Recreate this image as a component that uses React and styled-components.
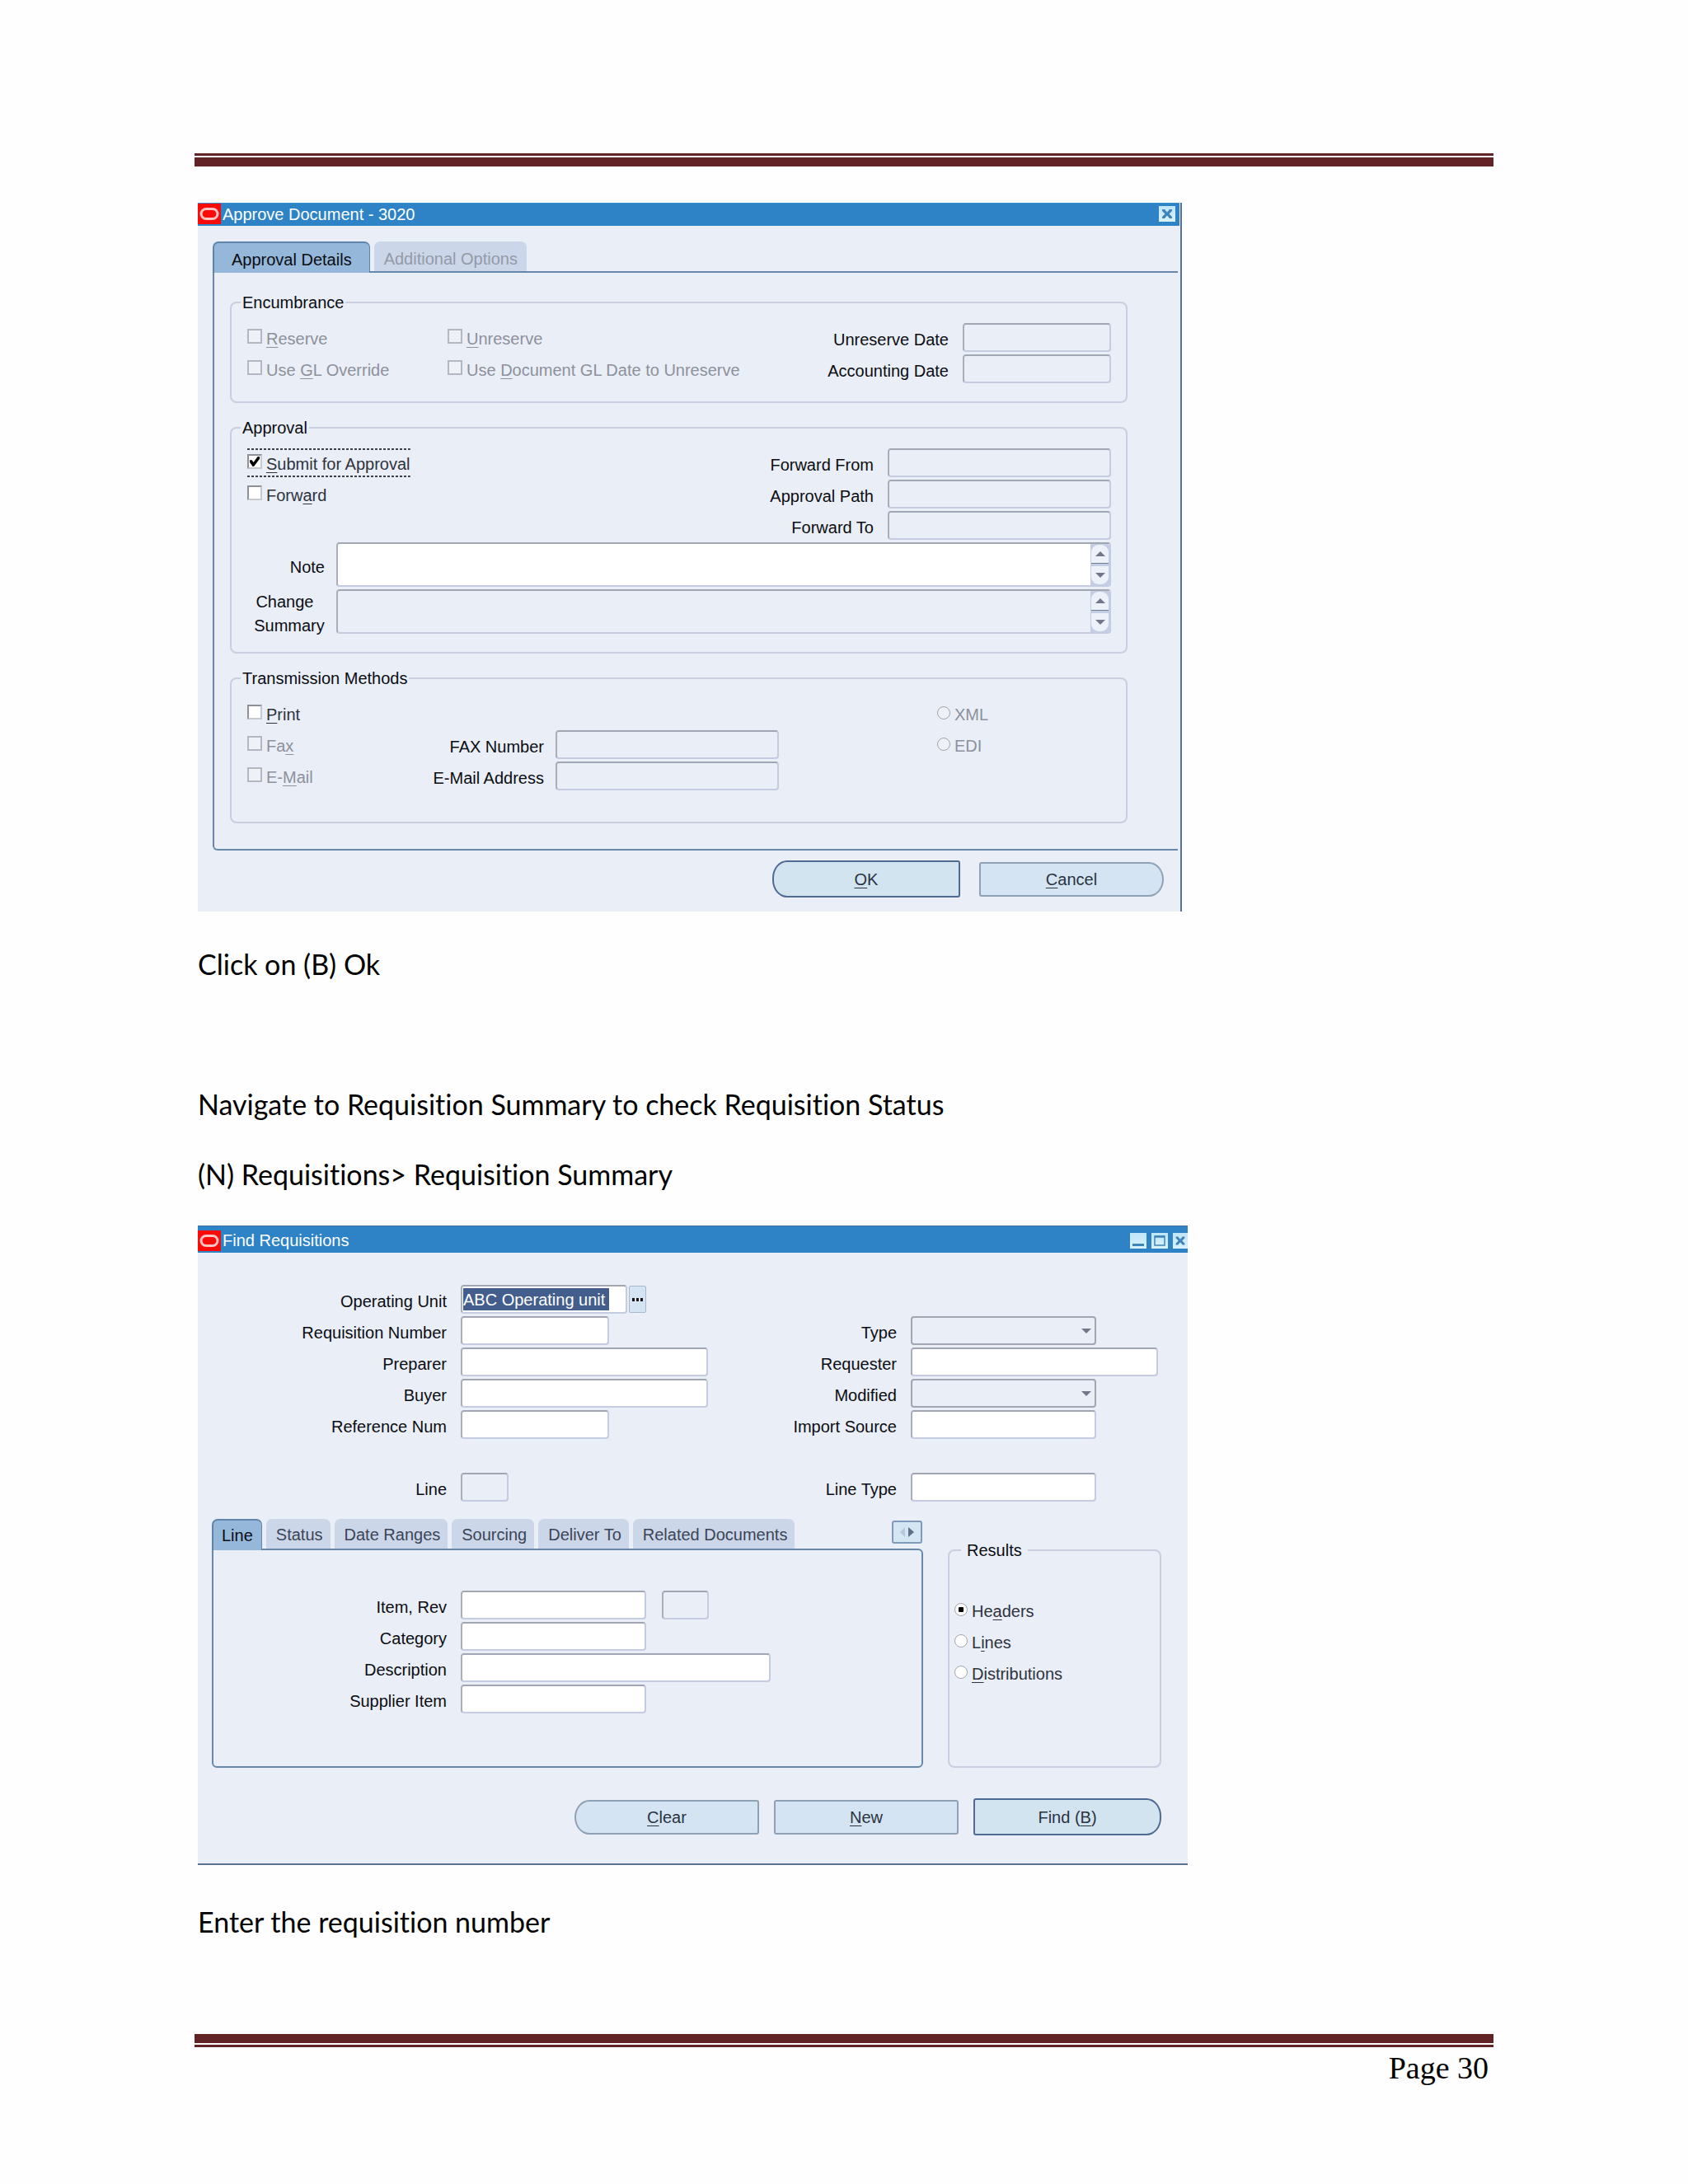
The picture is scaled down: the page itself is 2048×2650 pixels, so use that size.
import React, { useId } from 'react';
import styled, { createGlobalStyle, css } from 'styled-components';

const GlobalStyle = createGlobalStyle`
  *, *::before, *::after {
    box-sizing: border-box;
  }

  body {
    margin: 0;
    background: #fefefe;
  }

  button, input, select, textarea {
    font: inherit;
    color: inherit;
  }
`;

const Page = styled.main`
  padding: 186px 236px 80px;
  color: #000;
  font-family: Lato, "Open Sans", sans-serif;
`;

const Rule = styled.div`
  height: 16px;
  border: solid #622326;
  border-width: ${(p) => (p.$flip ? '11px 0 3px' : '3px 0 11px')};
`;

const Content = styled.div`
  padding: 44px 4px 113px;
`;

const Text = styled.p`
  margin: 0 0 ${(p) => (p.$gap ? p.$gap : '39px')};
  font-size: 34px;
  line-height: 46px;
  font-variant-ligatures: none;
`;

const PageNumber = styled.footer`
  padding: 2px 6px 0 0;
  text-align: right;
  font: 38px/46px "Liberation Serif", serif;
`;

/* ---- window chrome ---- */

const Window = styled.section`
  width: 100%;
  max-width: ${(p) => p.$width};
  margin-bottom: ${(p) => p.$after};
  background: #e9eef7;
  color: #0b0d12;
  font: 20px/24px "Liberation Sans", Arial, sans-serif;
  border: solid #5a7194;
  border-width: ${(p) => (p.$edge === 'right' ? '0 2px 0 0' : '0 0 2px')};
`;

const TitleBar = styled.header`
  display: flex;
  align-items: center;
  gap: 2px;
  height: ${(p) => (p.$tall ? '33px' : '28px')};
  padding-top: ${(p) => (p.$tall ? '2px' : '0')};
  padding-right: ${(p) => (p.$tall ? '0' : '5px')};
  padding-bottom: ${(p) => (p.$tall ? '0' : '2px')};
  margin-right: ${(p) => (p.$tall ? '0' : '1px')};
  background: #2d83c6;
  border-top: 1px solid ${(p) => (p.$tall ? '#3f6f9c' : '#3b8ecd')};
  color: #fff;
`;

const Title = styled.h2`
  flex: 1;
  margin: 0;
  font: inherit;
`;

const Controls = styled.div`
  display: flex;
  gap: 6px;
`;

const ControlButton = styled.button`
  display: flex;
  width: ${(p) => (p.$cut ? '18px' : '20px')};
  height: 19px;
  padding: 0;
  border: 0;
  overflow: hidden;
  background: linear-gradient(#bfe6f8, #d9f1fc);
`;

const Body = styled.div`
  padding-top: ${(p) => p.$top};
`;

/* ---- tabs ---- */

const TabArea = styled.div`
  flex: 1;
  margin: ${(p) => p.$margin || '0'};
`;

const TabStrip = styled.div`
  display: flex;
  gap: 5px;
  height: 36px;
`;

const Tab = styled.button`
  height: 36px;
  padding: ${(p) => (p.$low ? '6px 11px 0 12px' : '2px 9px 0 12px')};
  border: 0;
  border-radius: 7px 7px 0 0;
  background: #ccd6e9;
  color: #3b4556;
  white-space: nowrap;

  &:disabled {
    color: #939aa8;
  }

  ${(p) =>
    p.$active &&
    css`
      position: relative;
      height: 38px;
      padding: ${p.$low ? '6px 21px 2px' : '2px 10px 2px'};
      border: solid #5f84ab;
      border-width: 2px 1px 0 2px;
      background: #94b7da;
      color: #0b0d12;
    `}
`;

const TabScroll = styled.button`
  display: flex;
  align-items: center;
  justify-content: center;
  width: 37px;
  height: 28px;
  margin: 2px 1px 0 auto;
  padding: 0;
  border: 2px solid #7f9bb9;
  border-radius: 3px;
  background: #d4e5f3;
`;

const TabPanel = styled.div`
  border: 2px solid #6788ab;
  ${(p) =>
    p.$open
      ? css`
          border-right: 0;
          border-radius: 0 0 0 6px;
          padding: 24px 61px 31px 19px;
        `
      : css`
          border-radius: 0 6px 6px 6px;
          padding: 49px 0 64px;
        `}
`;

/* ---- form parts ---- */

const Group = styled.fieldset`
  min-width: 0;
  margin: 0 0 ${(p) => (p.$last ? '0' : '18px')};
  padding: 13px 18px ${(p) => (p.$last ? '38px' : '22px')} 19px;
  border: 2px solid #c9cee0;
  border-radius: 8px;
`;

const Legend = styled.legend`
  margin-left: -8px;
  padding: 0 2px;
  line-height: 24px;
`;

const ResultsGroup = styled(Group)`
  width: 259px;
  margin: 26px 0 0 30px;
  padding: 43px 6px 0;

  ${Legend} {
    margin-left: 8px;
    padding: 0 7px;
  }
`;

const Row = styled.div`
  display: flex;
  align-items: center;
  height: ${(p) => (p.$tall ? '54px' : '35px')};
  margin-top: ${(p) => (p.$spaced ? '41px' : '3px')};

  &:first-child, legend + & {
    margin-top: 0;
  }
`;

const RowPart = styled.div`
  display: flex;
  align-items: center;
  flex: 0 0 645px;
  margin-right: 192px;
`;

const Stack = styled.div`
  flex: ${(p) => p.$flex};
  padding-top: ${(p) => p.$top || '0'};
`;

const Columns = styled.div`
  display: flex;
`;

const LowerArea = styled.div`
  display: flex;
  padding: 21px 32px 0 17px;
`;

const FieldLabel = styled.label`
  flex: ${(p) => (p.$width ? `0 0 ${p.$width}` : 'none')};
  margin-left: ${(p) => (p.$width ? '0' : 'auto')};
  margin-right: ${(p) => (p.$tight ? '14px' : '17px')};
  padding-top: 5px;
  padding-left: ${(p) => (p.$center ? '8px' : '0')};
  text-align: ${(p) => (p.$center ? 'center' : 'right')};
  line-height: ${(p) => (p.$center ? '29px' : '24px')};
`;

const box = css`
  border: 2px solid #c5cbe0;
  border-top-color: #a1a6b3;
  border-left-color: #a9aebb;
  border-radius: 4px;
  background: #fff;
`;

const TextInput = styled.input`
  ${box}
  flex: none;
  width: ${(p) => p.$width};
  height: 35px;
  padding: 0 4px;

  &:disabled {
    background: #e9eef7;
  }
`;

const RevInput = styled(TextInput)`
  margin-left: 19px;
`;

const Select = styled.select`
  ${box}
  appearance: none;
  flex: none;
  width: 225px;
  height: 35px;
  border-color: #a1a6b3;
  background: #e9eef7;
`;

const SelectWrap = styled.div`
  display: flex;
  align-items: center;

  svg {
    margin-left: -18px;
    pointer-events: none;
  }
`;

const SelectedBox = styled.div`
  ${box}
  width: 202px;
  height: 35px;
  padding: 2px 1px;
  margin-right: 2px;
`;

const SelectedInput = styled.input`
  width: 177px;
  height: 27px;
  padding: 2px 0 0;
  border: 0;
  background: #435e8d;
  color: #fff;
`;

const ListButton = styled.button`
  display: flex;
  align-items: center;
  justify-content: center;
  width: 21px;
  height: 33px;
  padding: 0;
  border: 1px solid #a9b7cc;
  border-radius: 2px;
  background: #d4e4f3;
`;

const AreaBox = styled.div`
  ${box}
  display: flex;
  flex: 1;
  height: 54px;
  overflow: hidden;
  background: ${(p) => (p.$disabled ? '#e9eef7' : '#fff')};
`;

const Area = styled.textarea`
  flex: 1;
  padding: 2px 4px;
  border: 0;
  resize: none;
  background: transparent;
`;

const Scroller = styled.div`
  display: flex;
  flex-direction: column;
  gap: 3px;
  width: 23px;
  padding: 1px 1px 1px 1px;
  background: #c3cee5;
`;

const ScrollButton = styled.button`
  display: flex;
  flex: 1;
  align-items: center;
  justify-content: center;
  padding: 0;
  border: 0;
  border-bottom: ${(p) => (p.$up ? '1px solid #767c90' : '0')};
  border-radius: ${(p) => (p.$up ? '9px 9px 0 0' : '0 0 9px 9px')};
  background: #edf2fa;
`;

const Option = styled.label`
  display: flex;
  align-items: center;
  gap: 5px;
  flex: ${(p) => (p.$width ? `0 0 ${p.$width}` : 'none')};
  height: 35px;
  color: ${(p) => (p.$disabled ? '#8d919b' : '#2e333d')};
  white-space: nowrap;

  ${(p) =>
    p.$focused &&
    css`
      --dash: repeating-linear-gradient(90deg, #3c404a 0 3px, transparent 3px 5px);
      background: var(--dash) top / 100% 2px no-repeat, var(--dash) bottom / 100% 2px no-repeat;
    `}
`;

const OptionText = styled.span`
  padding-top: 2px;
`;

const Checkbox = styled.input`
  appearance: none;
  width: 18px;
  height: 18px;
  margin: 0 0 3px;
  border: 2px solid #c6c9d0;
  border-top-color: #8d9098;
  border-left-color: #8d9098;
  background: #fff;

  &:disabled {
    border-color: #b4b7c0;
    background: #eef1f6;
  }

  &:checked::before {
    content: '';
    display: block;
    width: 12px;
    height: 12px;
    margin: 1px;
    background: #000;
    clip-path: polygon(0 35%, 22% 35%, 38% 58%, 80% 0, 100% 0, 100% 22%, 42% 100%, 30% 100%, 0 58%);
  }
`;

const Radio = styled.input`
  appearance: none;
  display: grid;
  place-items: center;
  width: 16px;
  height: 16px;
  margin: 0 0 2px;
  border: 1px solid #a3a5ab;
  border-radius: 50%;
  background: #fff;

  &:disabled {
    background: #eef1f7;
  }

  &:checked::before {
    content: '';
    width: 6px;
    height: 6px;
    border-radius: 1px;
    background: #000;
  }
`;

const Key = styled.u`
  text-decoration-thickness: 1px;
  text-underline-offset: 3px;
`;

const Actions = styled.div`
  display: flex;
  align-items: center;
  justify-content: flex-end;
  gap: ${(p) => p.$gap};
  padding: ${(p) => p.$padding};
`;

const shapes = {
  left: '18px 3px 3px 18px / 21px 3px 3px 21px',
  right: '3px 18px 18px 3px / 3px 21px 21px 3px',
  none: '3px',
};

const ActionButton = styled.button`
  width: ${(p) => (p.$primary ? '228px' : '224px')};
  height: ${(p) => (p.$primary ? '45px' : '42px')};
  padding: 0;
  border: ${(p) => (p.$primary ? '2px solid #4f6a93' : '2px solid #8fa1b5')};
  border-radius: ${(p) => shapes[p.$round || 'none']};
  background: ${(p) => (p.$primary ? '#d3e4f1' : '#d4e4f3')};
  color: #2a3340;
`;

/* ---- drawings ---- */

const Logo = () => (
  <svg width="28" height="25" viewBox="0 0 28 25" aria-hidden="true">
    <rect width="28" height="25" fill="#fb0a0a" />
    <rect x="4" y="6.500" width="20" height="12" rx="6" fill="none" stroke="#ffc4c4" strokeWidth="3" />
  </svg>
);

const Cross = () => (
  <svg width="20" height="19" viewBox="0 0 20 19" aria-hidden="true">
    <path d="M4 4h3l3 3.500L13 4h3v2l-3.500 3.500L16 13v2h-3l-3-3.500L7 15H4v-2l3.500-3.500L4 6z" fill="#3f84b8" />
  </svg>
);

const Minimize = () => (
  <svg width="20" height="19" viewBox="0 0 20 19" aria-hidden="true">
    <rect x="3" y="13" width="14" height="3" fill="#3f84b8" />
  </svg>
);

const Maximize = () => (
  <svg width="20" height="19" viewBox="0 0 20 19" aria-hidden="true">
    <path d="M4 4h12v11H4z" fill="none" stroke="#3f84b8" strokeWidth="1.500" />
    <path d="M4 4.500h12" stroke="#3f84b8" strokeWidth="2.500" />
  </svg>
);

const Arrow = ({ up }) => (
  <svg width="12" height="6" viewBox="0 0 12 6" aria-hidden="true">
    <path d={up ? 'M0 6L6 0L12 6Z' : 'M0 0L6 6L12 0Z'} fill="#72778a" />
  </svg>
);

const SideArrows = () => (
  <svg width="18" height="12" viewBox="0 0 18 12" aria-hidden="true">
    <path d="M6 0v12L0 6z" fill="#b5c8dc" />
    <path d="M10 0v12l7-6z" fill="#5c7186" />
  </svg>
);

const Dots = () => (
  <svg width="13" height="4" viewBox="0 0 13 4" aria-hidden="true">
    <path d="M0 0h3v4H0zM5 0h3v4H5zM10 0h3v4h-3z" fill="#1e1418" />
  </svg>
);

/* ---- composed fields ---- */

function Field({ label, width, labelWidth, tight, disabled }) {
  const id = useId();
  return (
    <>
      <FieldLabel htmlFor={id} $width={labelWidth} $tight={tight}>{label}</FieldLabel>
      <TextInput id={id} type="text" $width={width} disabled={disabled} />
    </>
  );
}

function SelectField({ label, labelWidth }) {
  const id = useId();
  return (
    <>
      <FieldLabel htmlFor={id} $width={labelWidth}>{label}</FieldLabel>
      <SelectWrap>
        <Select id={id} />
        <Arrow />
      </SelectWrap>
    </>
  );
}

function AreaField({ label, name, disabled, center }) {
  const id = useId();
  return (
    <Row $tall>
      <FieldLabel htmlFor={id} $width="94px" $tight $center={center}>{label}</FieldLabel>
      <AreaBox $disabled={disabled}>
        <Area id={id} disabled={disabled} />
        <Scroller>
          <ScrollButton type="button" $up aria-label={`Scroll ${name} up`}><Arrow up /></ScrollButton>
          <ScrollButton type="button" aria-label={`Scroll ${name} down`}><Arrow /></ScrollButton>
        </Scroller>
      </AreaBox>
    </Row>
  );
}

function Check({ children, disabled, checked, focused, width }) {
  return (
    <Option $disabled={disabled} $focused={focused} $width={width}>
      <Checkbox type="checkbox" disabled={disabled} defaultChecked={checked} />
      <OptionText>{children}</OptionText>
    </Option>
  );
}

function Choice({ children, name, disabled, checked }) {
  return (
    <Option $disabled={disabled}>
      <Radio type="radio" name={name} disabled={disabled} defaultChecked={checked} />
      <OptionText>{children}</OptionText>
    </Option>
  );
}

function ApproveDocument() {
  return (
    <Window $width="1194px" $after="41px" $edge="right">
      <TitleBar>
        <Logo />
        <Title>Approve Document - 3020</Title>
        <ControlButton type="button" aria-label="Close"><Cross /></ControlButton>
      </TitleBar>
      <Body $top="19px">
        <TabArea $margin="0 3px 0 18px">
          <TabStrip role="tablist">
            <Tab type="button" role="tab" aria-selected="true" $active $low>Approval Details</Tab>
            <Tab type="button" role="tab" disabled $low>Additional Options</Tab>
          </TabStrip>
          <TabPanel $open role="tabpanel">
            <Group>
              <Legend>Encumbrance</Legend>
              <Row>
                <Check disabled width="243px"><Key>R</Key>eserve</Check>
                <Check disabled><Key>U</Key>nreserve</Check>
                <Field label="Unreserve Date" width="180px" disabled />
              </Row>
              <Row>
                <Check disabled width="243px">Use <Key>G</Key>L Override</Check>
                <Check disabled>Use <Key>D</Key>ocument GL Date to Unreserve</Check>
                <Field label="Accounting Date" width="180px" disabled />
              </Row>
            </Group>

            <Group>
              <Legend>Approval</Legend>
              <Row>
                <Check checked focused><Key>S</Key>ubmit for Approval</Check>
                <Field label="Forward From" width="271px" disabled />
              </Row>
              <Row>
                <Check>Forw<Key>a</Key>rd</Check>
                <Field label="Approval Path" width="271px" disabled />
              </Row>
              <Row>
                <Field label="Forward To" width="271px" disabled />
              </Row>
              <AreaField label="Note" name="note" />
              <AreaField label={<>Change&nbsp;&nbsp;<br />Summary</>} name="change summary" disabled center />
            </Group>

            <Group $last>
              <Legend>Transmission Methods</Legend>
              <Row>
                <RowPart>
                  <Check><Key>P</Key>rint</Check>
                </RowPart>
                <Choice name="format" disabled>XML</Choice>
              </Row>
              <Row>
                <RowPart>
                  <Check disabled>Fa<Key>x</Key></Check>
                  <Field label="FAX Number" width="271px" tight disabled />
                </RowPart>
                <Choice name="format" disabled>EDI</Choice>
              </Row>
              <Row>
                <RowPart>
                  <Check disabled>E-<Key>M</Key>ail</Check>
                  <Field label="E-Mail Address" width="271px" tight disabled />
                </RowPart>
              </Row>
            </Group>
          </TabPanel>
        </TabArea>
        <Actions $gap="23px" $padding="12px 20px 17px">
          <ActionButton type="button" $primary $round="left"><Key>O</Key>K</ActionButton>
          <ActionButton type="button" $round="right"><Key>C</Key>ancel</ActionButton>
        </Actions>
      </Body>
    </Window>
  );
}

const otherTabs = ['Status', 'Date Ranges', 'Sourcing', 'Deliver To', 'Related Documents'];

function FindRequisitions() {
  const unitId = useId();
  return (
    <Window $width="1201px" $after="46px" $edge="bottom">
      <TitleBar $tall>
        <Logo />
        <Title>Find Requisitions</Title>
        <Controls>
          <ControlButton type="button" aria-label="Minimize"><Minimize /></ControlButton>
          <ControlButton type="button" aria-label="Maximize"><Maximize /></ControlButton>
          <ControlButton type="button" aria-label="Close" $cut><Cross /></ControlButton>
        </Controls>
      </TitleBar>
      <Body $top="39px">
        <Columns>
          <Stack $flex="0 0 636px">
            <Row>
              <FieldLabel htmlFor={unitId} $width="302px">Operating Unit</FieldLabel>
              <SelectedBox>
                <SelectedInput id={unitId} type="text" defaultValue="ABC Operating unit" />
              </SelectedBox>
              <ListButton type="button" aria-label="List of values"><Dots /></ListButton>
            </Row>
            <Row><Field label="Requisition Number" labelWidth="302px" width="180px" /></Row>
            <Row><Field label="Preparer" labelWidth="302px" width="300px" /></Row>
            <Row><Field label="Buyer" labelWidth="302px" width="300px" /></Row>
            <Row><Field label="Reference Num" labelWidth="302px" width="180px" /></Row>
            <Row $spaced><Field label="Line" labelWidth="302px" width="58px" disabled /></Row>
          </Stack>
          <Stack $flex="1" $top="38px">
            <Row><SelectField label="Type" labelWidth="212px" /></Row>
            <Row><Field label="Requester" labelWidth="212px" width="300px" /></Row>
            <Row><SelectField label="Modified" labelWidth="212px" /></Row>
            <Row><Field label="Import Source" labelWidth="212px" width="225px" /></Row>
            <Row $spaced><Field label="Line Type" labelWidth="212px" width="225px" /></Row>
          </Stack>
        </Columns>

        <LowerArea>
          <TabArea>
            <TabStrip role="tablist">
              <Tab type="button" role="tab" aria-selected="true" $active>Line</Tab>
              {otherTabs.map((name) => (
                <Tab key={name} type="button" role="tab">{name}</Tab>
              ))}
              <TabScroll type="button" aria-label="More tabs"><SideArrows /></TabScroll>
            </TabStrip>
            <TabPanel role="tabpanel">
              <Row>
                <Field label="Item, Rev" labelWidth="283px" width="225px" />
                <RevInput type="text" aria-label="Revision" $width="57px" disabled />
              </Row>
              <Row><Field label="Category" labelWidth="283px" width="225px" /></Row>
              <Row><Field label="Description" labelWidth="283px" width="376px" /></Row>
              <Row><Field label="Supplier Item" labelWidth="283px" width="225px" /></Row>
            </TabPanel>
          </TabArea>
          <ResultsGroup>
            <Legend>Results</Legend>
            <Row><Choice name="results" checked>He<Key>a</Key>ders</Choice></Row>
            <Row><Choice name="results">L<Key>i</Key>nes</Choice></Row>
            <Row><Choice name="results"><Key>D</Key>istributions</Choice></Row>
          </ResultsGroup>
        </LowerArea>

        <Actions $gap="18px" $padding="37px 32px 34px">
          <ActionButton type="button" $round="left"><Key>C</Key>lear</ActionButton>
          <ActionButton type="button"><Key>N</Key>ew</ActionButton>
          <ActionButton type="button" $primary $round="right">Find (<Key>B</Key>)</ActionButton>
        </Actions>
      </Body>
    </Window>
  );
}

export default function App() {
  return (
    <>
      <GlobalStyle />
      <Page>
        <Rule />
        <Content>
          <ApproveDocument />
          <Text $gap="124px">Click on (B) Ok</Text>
          <Text>Navigate to Requisition Summary to check Requisition Status</Text>
          <Text>(N) Requisitions&gt; Requisition Summary</Text>
          <FindRequisitions />
          <Text $gap="0">Enter the requisition number</Text>
        </Content>
        <Rule $flip />
        <PageNumber>Page 30</PageNumber>
      </Page>
    </>
  );
}
